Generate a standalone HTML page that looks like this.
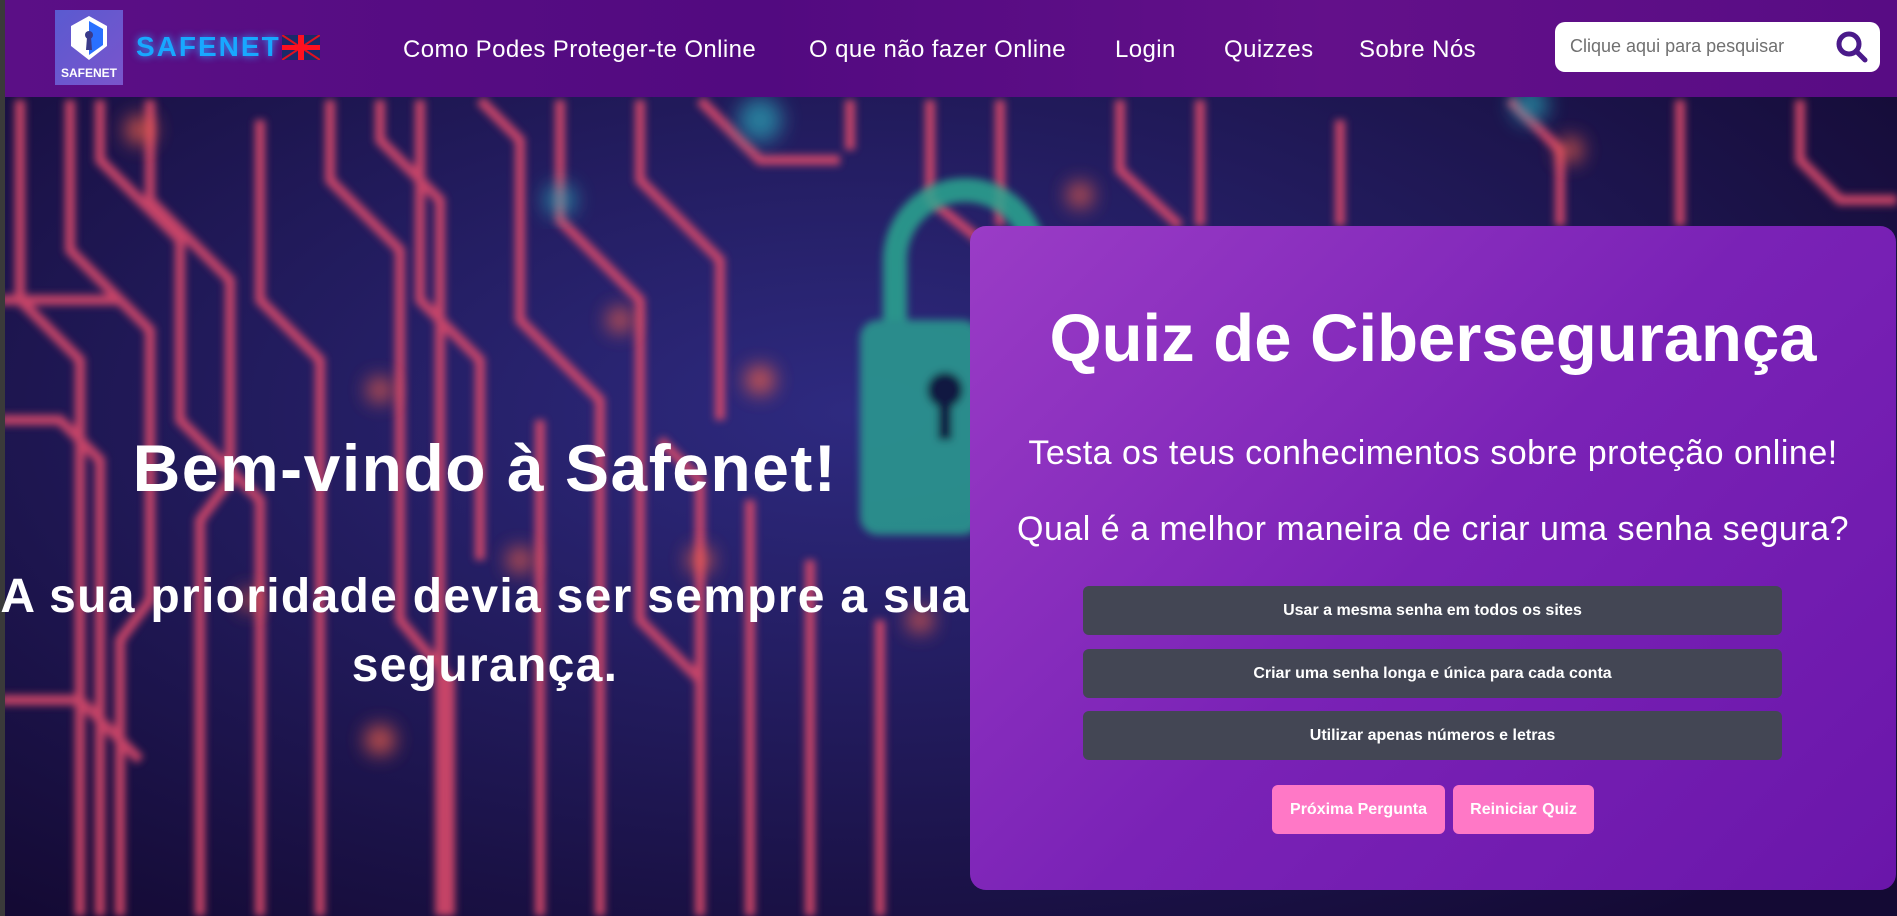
<!DOCTYPE html>
<html><head><meta charset="utf-8"><style>
*{margin:0;padding:0;box-sizing:border-box}
body{width:1897px;height:916px;overflow:hidden;font-family:"Liberation Sans",sans-serif;background:#140f3a;position:relative}
.bg{position:absolute;left:0;top:0;width:1897px;height:916px}
nav{position:absolute;left:5px;top:0;width:1892px;height:97px;background:linear-gradient(90deg,#5b0f86,#520a80 40%,#63108a 70%,#580c84);}
.edge{position:absolute;left:0;top:0;width:5px;height:916px;background:#3a3a3a}
.logo{position:absolute;left:55px;top:10px;width:68px;height:75px;background:linear-gradient(135deg,#5a5ad0,#7a55cc)}
.brand{position:absolute;left:136px;top:31px;font-size:28px;font-weight:bold;letter-spacing:2px;color:#18a8ff;text-shadow:0 0 8px #2aa0ff}
.links a{position:absolute;top:36px;color:#fff;font-size:24px;letter-spacing:0.4px;text-decoration:none;white-space:nowrap}
.search{position:absolute;left:1555px;top:22px;width:325px;height:50px;background:#fff;border-radius:10px}
.search span{position:absolute;left:15px;top:14px;font-size:18px;color:#707070}
.hero1{position:absolute;left:0;width:970px;text-align:center;color:#fff;font-weight:bold;white-space:nowrap}
.quiz{position:absolute;left:970px;top:226px;width:926px;height:664px;border-radius:16px;background:linear-gradient(135deg,#9a3cc6,#7a22b6 50%,#6a16aa);color:#fff;text-align:center}
.opt{position:absolute;left:113px;width:699px;height:49px;background:#434654;border-radius:6px;font-size:16px;font-weight:bold;line-height:49px;color:#fff}
.pk{position:absolute;top:559px;height:49px;background:#ff78c6;border-radius:6px;font-size:16px;font-weight:bold;line-height:49px;color:#fff}
</style></head><body>
<svg class="bg" viewBox="0 0 1897 916">
<defs><filter id="b"><feGaussianBlur stdDeviation="4"/></filter><filter id="b2"><feGaussianBlur stdDeviation="10"/></filter>
<radialGradient id="g" cx="0.45" cy="0.45" r="0.7"><stop offset="0" stop-color="#2e2a80"/><stop offset="1" stop-color="#140a34"/></radialGradient></defs>
<rect width="1897" height="916" fill="url(#g)"/>
<g stroke="#d8486a" stroke-width="10" fill="none" filter="url(#b)" opacity="0.9">
<path d="M20 100 V300 L80 360 V916"/><path d="M70 100 V250 L150 330 V600 L120 640 V916"/>
<path d="M150 100 V200 L230 280 V480 L200 520 V916"/><path d="M260 120 V300 L320 360 V916"/>
<path d="M330 100 V180 L400 250 V620 L450 680 V916"/><path d="M420 100 V300 L480 360 V560"/>
<path d="M480 100 L520 140 V320 L600 400 V916"/><path d="M560 100 V220 L640 300 V620 L700 680 V916"/>
<path d="M640 100 V180 L720 260 V420"/><path d="M700 100 L760 160 H840"/><path d="M750 500 V916"/>
<path d="M810 560 V916"/><path d="M880 620 V916"/><path d="M930 100 V200 L980 240"/>
<path d="M1000 100 V226"/><path d="M1120 100 V170 L1180 226"/><path d="M1200 100 V226"/><path d="M1340 120 V226"/>
<path d="M1510 100 L1560 150 V226"/><path d="M1680 100 V226"/><path d="M1800 100 V160 L1840 200 H1897"/>
<path d="M0 300 H120"/><path d="M0 700 H80 L140 760"/>
<path d="M100 100 V160 L180 240 V420 L260 500 V916"/><path d="M540 420 V916"/><path d="M660 440 L700 480 V916"/>
<path d="M380 100 V140 L440 200 V916"/><path d="M0 420 H60 L100 460 V916"/><path d="M850 100 V150"/>
</g>
<g fill="#f0604a" filter="url(#b2)" opacity="0.9">
<circle cx="140" cy="130" r="14"/><circle cx="380" cy="390" r="12"/><circle cx="760" cy="380" r="14"/><circle cx="620" cy="320" r="12"/>
<circle cx="380" cy="740" r="14"/><circle cx="1080" cy="195" r="12"/><circle cx="920" cy="620" r="12"/><circle cx="1570" cy="150" r="12"/>
<circle cx="520" cy="560" r="12"/><circle cx="250" cy="600" r="10"/><circle cx="700" cy="560" r="12"/>
</g>
<g fill="#2aa8b8" filter="url(#b2)" opacity="0.7"><circle cx="760" cy="120" r="22"/><circle cx="1530" cy="105" r="18"/><circle cx="560" cy="200" r="16"/></g>
<g filter="url(#b)" opacity="0.85">
<path d="M895 320 V260 a70 70 0 0 1 140 0 V320" stroke="#2aa890" stroke-width="24" fill="none"/>
<rect x="860" y="320" width="120" height="215" rx="18" fill="#2c9e90"/>
<circle cx="945" cy="390" r="18" fill="#101838"/><rect x="938" y="395" width="14" height="45" fill="#101838"/>
</g>
</svg>
<div class="edge"></div>
<nav></nav>
<div class="logo"><svg width="68" height="75" viewBox="0 0 68 75"><path d="M34 6 L52 16 V36 L34 50 L16 36 V16 Z" fill="#fff"/><path d="M34 11 L48 19 V35 L34 45 Z" fill="#2a70ff"/><circle cx="34" cy="25" r="4" fill="#3a3a8a"/><path d="M32 27 H36 L37 40 H31Z" fill="#3a3a8a"/><text x="34" y="67" text-anchor="middle" font-size="12" font-weight="bold" fill="#fff" font-family="Liberation Sans,sans-serif">SAFENET</text></svg></div>
<div class="brand">SAFENET</div>
<svg style="position:absolute;left:282px;top:35px" width="38" height="25" viewBox="0 0 38 25"><rect width="38" height="25" fill="#1a2a6a"/><path d="M0 0 L38 25 M38 0 L0 25" stroke="#e01020" stroke-width="2"/><rect x="16" width="6" height="25" fill="#ff1020"/><rect y="10" width="38" height="5" fill="#ff1020"/></svg>
<div class="links"><a style="left:403px">Como Podes Proteger-te Online</a><a style="left:809px">O que não fazer Online</a><a style="left:1115px">Login</a><a style="left:1224px">Quizzes</a><a style="left:1359px">Sobre Nós</a></div>
<div class="search"><span>Clique aqui para pesquisar</span><svg style="position:absolute;left:280px;top:8px" width="34" height="34" viewBox="0 0 34 34"><circle cx="14" cy="14" r="10" stroke="#4a1a8a" stroke-width="5" fill="none"/><path d="M21 21 L30 30" stroke="#4a1a8a" stroke-width="5" stroke-linecap="round"/></svg></div>
<div class="hero1" style="top:430px;font-size:66px;letter-spacing:1.5px">Bem-vindo à Safenet!</div>
<div class="hero1" style="top:562px;font-size:48px;line-height:69px;letter-spacing:1.3px">A sua prioridade devia ser sempre a sua<br>segurança.</div>
<div class="quiz">
<div style="position:absolute;left:0;width:100%;top:74px;font-size:67px;font-weight:bold">Quiz de Cibersegurança</div>
<div style="position:absolute;left:0;width:100%;top:208px;font-size:34px;letter-spacing:0.5px">Testa os teus conhecimentos sobre proteção online!</div>
<div style="position:absolute;left:0;width:100%;top:284px;font-size:34px;letter-spacing:0.5px">Qual é a melhor maneira de criar uma senha segura?</div>
<div class="opt" style="top:360px">Usar a mesma senha em todos os sites</div>
<div class="opt" style="top:423px">Criar uma senha longa e única para cada conta</div>
<div class="opt" style="top:485px">Utilizar apenas números e letras</div>
<div class="pk" style="left:302px;width:173px">Próxima Pergunta</div>
<div class="pk" style="left:483px;width:141px">Reiniciar Quiz</div>
</div>
</body></html>
